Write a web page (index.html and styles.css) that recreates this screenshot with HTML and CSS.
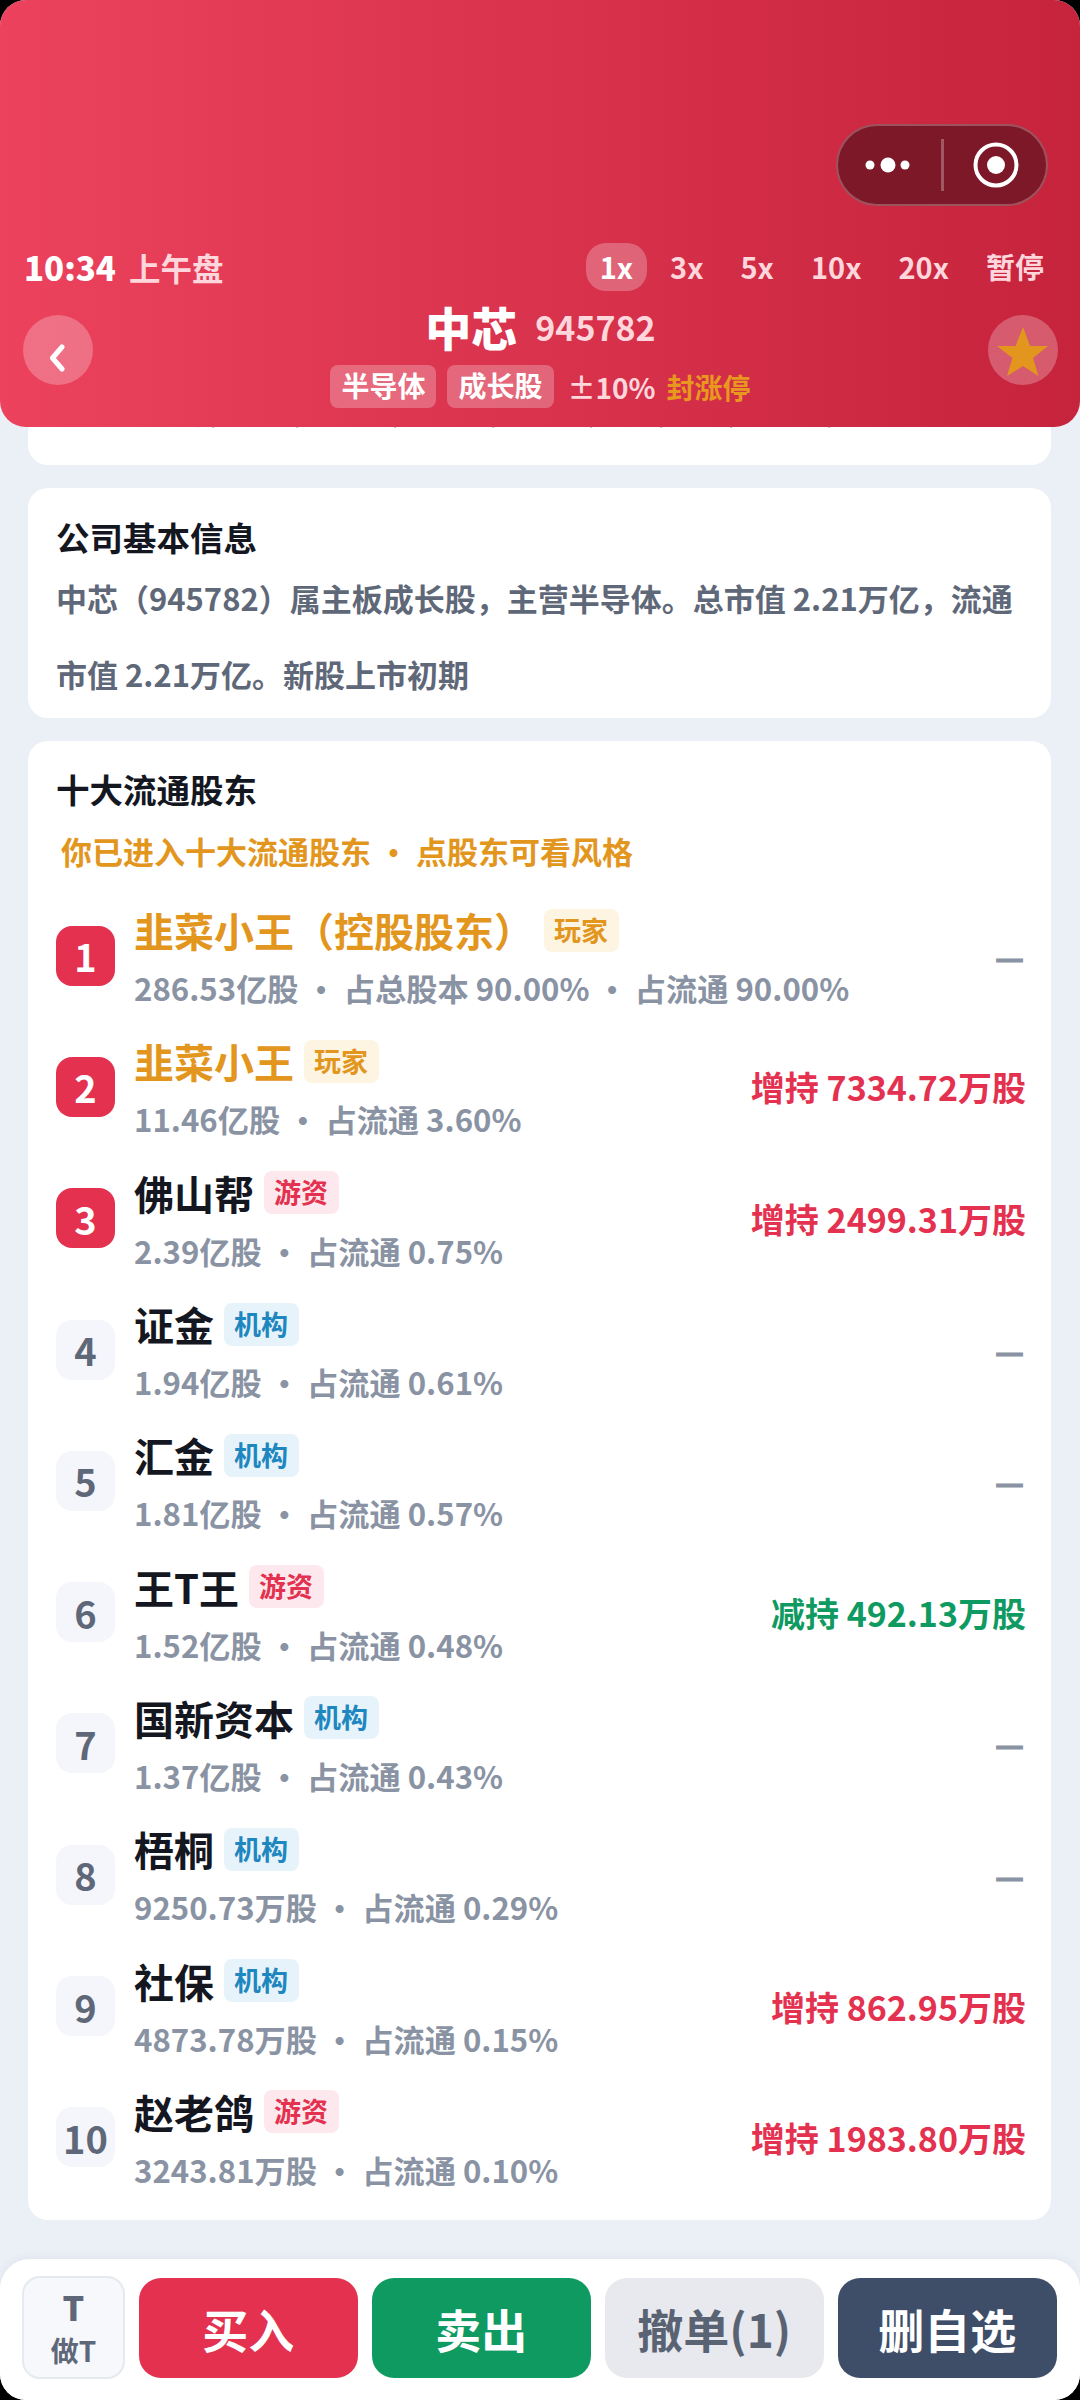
FILE: index.html

```html
<!DOCTYPE html>
<html lang="zh-CN">
<head>
  <meta charset="UTF-8">
  <meta name="viewport" content="width=device-width, initial-scale=1.0">
  <title>中芯 945782</title>
  <link rel="stylesheet" href="styles.css">
</head>
<body>
<div class="phone">

  <div class="header">
    <div class="capsule">
      <svg class="capsule-dots" width="52" height="20" viewBox="0 0 52 20"><circle cx="8" cy="10" r="4.5"/><circle cx="26" cy="10" r="7.5"/><circle cx="43" cy="10" r="4.5"/></svg>
      <div class="capsule-line"></div>
      <svg class="capsule-ring" width="46" height="46" viewBox="0 0 46 46"><circle class="ring" cx="23" cy="23" r="20.5"/><circle cx="23" cy="23" r="9"/></svg>
    </div>

    <div class="clock-row">
      <div class="clock"><b>10:34</b><span>上午盘</span></div>
      <div class="speeds">
        <span class="speed on">1x</span>
        <span class="speed">3x</span>
        <span class="speed">5x</span>
        <span class="speed">10x</span>
        <span class="speed">20x</span>
        <span class="speed">暂停</span>
      </div>
    </div>

    <div class="stock-row">
      <div class="round-btn back-btn">
        <svg width="16" height="28" viewBox="0 0 16 28"><path d="M13 3 L3.5 14 L13 25" fill="none" stroke="#fff" stroke-width="5" stroke-linecap="round" stroke-linejoin="round"/></svg>
      </div>
      <div class="stock-info">
        <div class="stock-name"><b>中芯</b><span>945782</span></div>
        <div class="stock-tags">
          <span class="chip">半导体</span>
          <span class="chip">成长股</span>
          <span class="limit">±10%</span>
          <span class="sealed">封涨停</span>
        </div>
      </div>
      <div class="round-btn star-btn">
        <svg width="52" height="50" viewBox="0 0 52 50"><path d="M26 0 L33 19 L51 19 L36 31 L41.5 49 L26 39 L10 49 L15.5 31 L0 19 L18.5 19 Z" fill="#e2961e"/></svg>
      </div>
    </div>
  </div>

  <div class="content">
    <div class="card card-cut">
      <p class="cut-text">上市首日涨跌幅限制较宽，换手率较高，短线资金活跃，注意波动风险，留意封单变化，谨慎追高，控制仓位，关注板块轮动，量能变化。</p>
    </div>

    <div class="card info-card">
      <div class="card-title">公司基本信息</div>
      <p class="info-text">中芯（945782）属主板成长股，主营半导体。总市值 2.21万亿，流通市值 2.21万亿。新股上市初期</p>
    </div>

    <div class="card holders-card">
      <div class="card-title">十大流通股东</div>
      <div class="holders-note">你已进入十大流通股东 ・ 点股东可看风格</div>

      <div class="holder">
        <div class="rank top">1</div>
        <div class="holder-main">
          <div class="holder-name me"><span>韭菜小王（控股股东）</span><em class="tag tag-me">玩家</em></div>
          <div class="holder-sub">286.53亿股 ・ 占总股本 90.00% ・ 占流通 90.00%</div>
        </div>
        <div class="change flat">—</div>
      </div>

      <div class="holder">
        <div class="rank top">2</div>
        <div class="holder-main">
          <div class="holder-name me"><span>韭菜小王</span><em class="tag tag-me">玩家</em></div>
          <div class="holder-sub">11.46亿股 ・ 占流通 3.60%</div>
        </div>
        <div class="change up">增持 7334.72万股</div>
      </div>

      <div class="holder">
        <div class="rank top">3</div>
        <div class="holder-main">
          <div class="holder-name"><span>佛山帮</span><em class="tag tag-hot">游资</em></div>
          <div class="holder-sub">2.39亿股 ・ 占流通 0.75%</div>
        </div>
        <div class="change up">增持 2499.31万股</div>
      </div>

      <div class="holder">
        <div class="rank">4</div>
        <div class="holder-main">
          <div class="holder-name"><span>证金</span><em class="tag tag-org">机构</em></div>
          <div class="holder-sub">1.94亿股 ・ 占流通 0.61%</div>
        </div>
        <div class="change flat">—</div>
      </div>

      <div class="holder">
        <div class="rank">5</div>
        <div class="holder-main">
          <div class="holder-name"><span>汇金</span><em class="tag tag-org">机构</em></div>
          <div class="holder-sub">1.81亿股 ・ 占流通 0.57%</div>
        </div>
        <div class="change flat">—</div>
      </div>

      <div class="holder">
        <div class="rank">6</div>
        <div class="holder-main">
          <div class="holder-name"><span>王T王</span><em class="tag tag-hot">游资</em></div>
          <div class="holder-sub">1.52亿股 ・ 占流通 0.48%</div>
        </div>
        <div class="change down">减持 492.13万股</div>
      </div>

      <div class="holder">
        <div class="rank">7</div>
        <div class="holder-main">
          <div class="holder-name"><span>国新资本</span><em class="tag tag-org">机构</em></div>
          <div class="holder-sub">1.37亿股 ・ 占流通 0.43%</div>
        </div>
        <div class="change flat">—</div>
      </div>

      <div class="holder">
        <div class="rank">8</div>
        <div class="holder-main">
          <div class="holder-name"><span>梧桐</span><em class="tag tag-org">机构</em></div>
          <div class="holder-sub">9250.73万股 ・ 占流通 0.29%</div>
        </div>
        <div class="change flat">—</div>
      </div>

      <div class="holder">
        <div class="rank">9</div>
        <div class="holder-main">
          <div class="holder-name"><span>社保</span><em class="tag tag-org">机构</em></div>
          <div class="holder-sub">4873.78万股 ・ 占流通 0.15%</div>
        </div>
        <div class="change up">增持 862.95万股</div>
      </div>

      <div class="holder">
        <div class="rank">10</div>
        <div class="holder-main">
          <div class="holder-name"><span>赵老鸽</span><em class="tag tag-hot">游资</em></div>
          <div class="holder-sub">3243.81万股 ・ 占流通 0.10%</div>
        </div>
        <div class="change up">增持 1983.80万股</div>
      </div>
    </div>
  </div>

  <div class="action-bar">
    <div class="t-btn"><b>T</b><span>做T</span></div>
    <button class="action buy">买入</button>
    <button class="action sell">卖出</button>
    <button class="action cancel">撤单(1)</button>
    <button class="action unfav">删自选</button>
  </div>

</div>
</body>
</html>
```

FILE: styles.css

```css
* {
  box-sizing: border-box;
}
html, body {
  margin: 0;
  height: 2400px;
  background: #000;
}
body {
  font-family: "Noto Sans CJK SC", "Noto Sans", sans-serif;
  font-weight: 700;
}
p {
  margin: 0;
}

.phone {
  display: flex;
  flex-direction: column;
  width: 1080px;
  height: 2400px;
  border-radius: 26px;
  overflow: hidden;
  background: #ebeff6;
}

/* header */
.header {
  position: relative;
  z-index: 2;
  flex: none;
  height: 427px;
  padding: 124px 22px 0 22px;
  border-radius: 0 0 26px 26px;
  background: linear-gradient(90deg, #ec425d, #c6233c);
  color: #fff;
}
.capsule {
  display: flex;
  align-items: center;
  width: 212px;
  height: 82px;
  margin: 0 10px 0 auto;
  padding-left: 24px;
  border: 2px solid rgba(255, 255, 255, 0.25);
  border-radius: 41px;
  background: #7c1827;
}
.capsule-dots {
  fill: #fff;
}
.capsule-line {
  width: 3px;
  height: 52px;
  margin-left: 27px;
  background: rgba(255, 255, 255, 0.28);
}
.capsule-ring {
  margin-left: 29px;
  fill: #fff;
}
.capsule-ring .ring {
  fill: none;
  stroke: #fff;
  stroke-width: 4;
}

.clock-row {
  display: flex;
  justify-content: space-between;
  align-items: center;
  height: 48px;
  margin-top: 37px;
}
.clock {
  display: flex;
  align-items: center;
  gap: 13px;
  padding-left: 2px;
}
.clock b {
  font-size: 33px;
}
.clock span {
  font-size: 31.5px;
  color: #ffd6dc;
}
.speeds {
  display: flex;
  align-items: center;
  gap: 9px;
}
.speed {
  padding: 0 14px;
  height: 48px;
  line-height: 46px;
  border-radius: 20px;
  font-size: 29px;
  color: #ffd6dc;
}
.speed.on {
  background: rgba(255, 255, 255, 0.25);
  color: #fff;
}

.stock-row {
  display: flex;
  justify-content: space-between;
  align-items: flex-start;
  margin-top: 7px;
}
.round-btn {
  display: flex;
  justify-content: center;
  align-items: center;
  flex: none;
  width: 70px;
  height: 70px;
  margin-top: 17px;
  border-radius: 50%;
  background: rgba(255, 255, 255, 0.25);
}
.back-btn {
  margin-left: 1px;
  padding: 16px 3px 0 0;
}
.star-btn {
  padding-top: 4px;
}
.stock-info {
  display: flex;
  flex-direction: column;
  align-items: center;
}
.stock-name {
  display: flex;
  align-items: center;
  gap: 18px;
  height: 56px;
}
.stock-name b {
  font-size: 46px;
}
.stock-name span {
  font-size: 34px;
  color: #ffd6dc;
}
.stock-tags {
  display: flex;
  align-items: center;
  gap: 11px;
  margin-top: 11px;
  font-size: 28px;
}
.chip {
  height: 43px;
  line-height: 41px;
  padding: 0 11px;
  border-radius: 8px;
  background: rgba(255, 255, 255, 0.25);
}
.limit {
  margin-left: 3px;
  color: #ffd6dc;
}
.sealed {
  color: #e8981f;
}

/* scroll area */
.content {
  flex: 1;
  min-height: 0;
  overflow: hidden;
  padding: 0 29px 0 28px;
}
.card {
  margin-bottom: 23px;
  border-radius: 20px;
  background: #fff;
}
.card-cut {
  height: 53px;
  margin-top: -15px;
  padding: 0 28px;
  overflow: hidden;
}
.cut-text {
  font-size: 14px;
  line-height: 14px;
  color: #5f6878;
  white-space: nowrap;
}
.card-title {
  font-size: 33.5px;
  line-height: 44px;
  color: #14171f;
}
.info-card {
  height: 230px;
  padding: 27px 28px 0;
}
.info-text {
  margin-top: 1px;
  font-size: 31px;
  line-height: 76px;
  color: #5f6878;
}
.holders-card {
  height: 1479px;
  padding: 26px 25px 0 28px;
}
.holders-note {
  margin-top: 18px;
  padding-left: 5px;
  font-size: 31px;
  line-height: 44px;
  color: #e2961e;
}
.holder {
  display: flex;
  align-items: center;
  height: 131.3px;
}
.holders-note + .holder {
  margin-top: 17px;
}
.rank {
  display: flex;
  justify-content: center;
  align-items: center;
  flex: none;
  width: 59px;
  height: 60px;
  margin-right: 19px;
  border-radius: 16px;
  background: #f4f6fb;
  font-size: 38px;
  color: #5f6878;
}
.rank.top {
  background: #e3314f;
  color: #fff;
}
.holder-main {
  flex: 1;
  min-width: 0;
}
.holder-name {
  display: flex;
  align-items: center;
  height: 54px;
  font-size: 40px;
  color: #14171f;
}
.holder-name.me {
  color: #e2961e;
}
.tag {
  height: 43px;
  line-height: 41px;
  margin-left: 9.5px;
  padding: 0 10.5px;
  border-radius: 8px;
  font-size: 27px;
  font-style: normal;
}
.tag-me {
  background: #fdf4e2;
  color: #e2961e;
}
.tag-hot {
  background: #fde9ed;
  color: #e3314f;
}
.tag-org {
  background: #e7f3fa;
  color: #1e87c0;
}
.holder-sub {
  margin-top: 11px;
  font-size: 31.2px;
  line-height: 40px;
  color: #8a93a3;
  white-space: nowrap;
}
.change {
  flex: none;
  font-size: 34px;
}
.change.up {
  color: #e3314f;
}
.change.down {
  color: #0f9a62;
}
.change.flat {
  margin-right: 2px;
  font-size: 32px;
  -webkit-text-stroke: 1px #8a93a3;
  color: #8a93a3;
}

/* bottom actions */
.action-bar {
  flex: none;
  display: flex;
  align-items: center;
  gap: 13.5px;
  height: 141px;
  padding: 0 23px 4px 22px;
  border-radius: 30px 30px 0 0;
  background: #fff;
  box-shadow: 0 -2px 8px rgba(60, 70, 100, 0.06);
}
.t-btn {
  display: flex;
  flex-direction: column;
  align-items: center;
  justify-content: center;
  flex: none;
  width: 103px;
  height: 103px;
  border: 2px solid #e6e9f0;
  border-radius: 18px;
  background: #f6f8fc;
  color: #5f6878;
}
.t-btn b {
  font-size: 34px;
  line-height: 44px;
}
.t-btn span {
  font-size: 28px;
  line-height: 42px;
}
.action {
  flex: 1;
  height: 100px;
  padding: 0;
  border: none;
  border-radius: 22px;
  font-family: inherit;
  font-weight: 700;
  font-size: 46px;
  color: #fff;
}
.buy {
  background: #e3314f;
}
.sell {
  background: #0f9a62;
}
.cancel {
  background: #e7e9ee;
  color: #5a6373;
}
.unfav {
  background: #3f4e68;
}
```
